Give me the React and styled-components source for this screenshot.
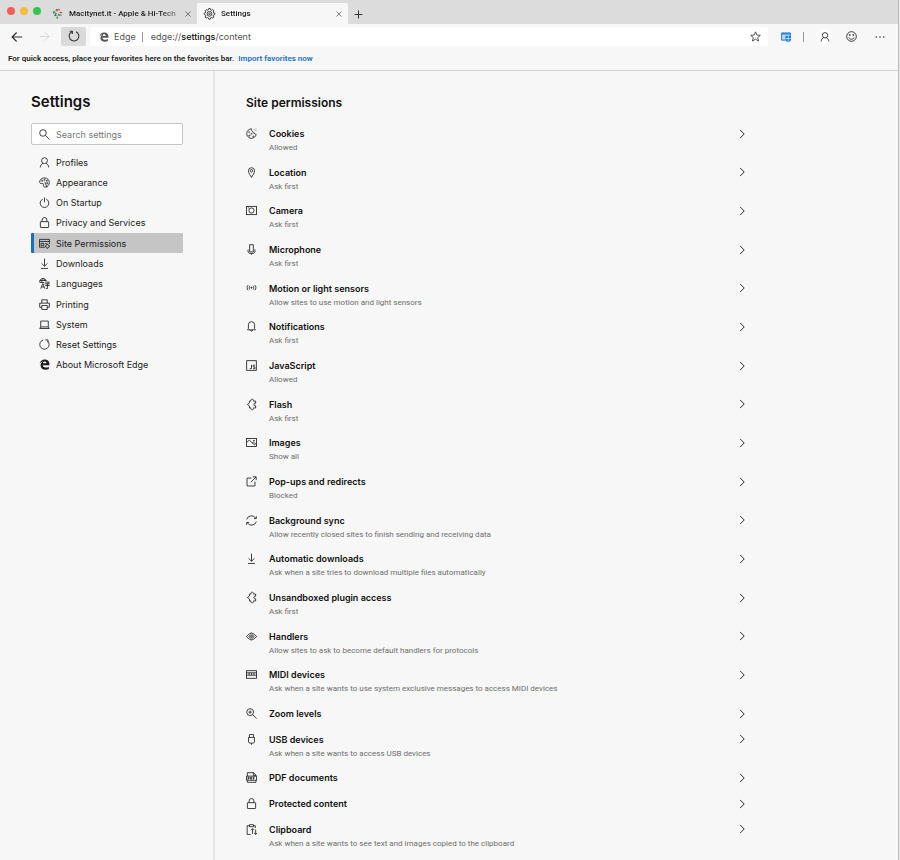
import React, { useState } from "react";
import styled, { createGlobalStyle } from "styled-components";

const GlobalStyle = createGlobalStyle`
  * {
    box-sizing: border-box;
  }

  body {
    margin: 0;
    background: #e6e6e6;
    font-family: Inter, "Liberation Sans", sans-serif;
    font-size: 9px;
    color: #1b1b1b;
  }

  button, input {
    font: inherit;
    color: inherit;
    border: 0;
    padding: 0;
    background: none;
  }

  a {
    color: inherit;
    text-decoration: none;
  }
`;

const Window = styled.div`
  display: flex;
  flex-direction: column;
  min-height: 100vh;
  margin-right: 1px;
  border-right: 1px solid #bdbdbd;
  background: #f7f7f7;
`;

const TabStrip = styled.div`
  display: flex;
  align-items: flex-end;
  height: 24px;
  padding-left: 7px;
  background: #dcdcdc;
`;

const Lights = styled.div`
  display: flex;
  align-self: center;
  gap: 5px;
  width: 43px;
  padding-bottom: 2px;
`;

const Light = styled.button`
  width: 8px;
  height: 8px;
  border-radius: 50%;
  background: ${props => props.$color};
`;

const Tab = styled.div`
  display: flex;
  align-items: center;
  gap: 6px;
  width: ${props => props.$active ? "151px" : "147px"};
  height: 21px;
  padding: 0 5px 0 ${props => props.$active ? "7px" : "2px"};
  border-radius: 2px 2px 0 0;
  background: ${props => props.$active ? "#f7f7f7" : "transparent"};
  font-family: Roboto, "Liberation Sans", sans-serif;
  font-size: 8px;
`;

const TabTitle = styled.span`
  flex: 1;
  white-space: nowrap;
  font-weight: 500;
  mask-image: linear-gradient(to right, #000 85%, rgba(0, 0, 0, 0.4));
`;

const IconButton = styled.button`
  display: flex;
  align-items: center;
  justify-content: center;
  width: ${props => props.$size || 20}px;
  height: ${props => props.$size || 20}px;
  border-radius: ${props => props.$round ? "50%" : "2px"};
  background: ${props => props.$bg || "transparent"};
  color: ${props => props.$color || "#333"};
`;

const Toolbar = styled.div`
  display: flex;
  align-items: center;
  height: 26px;
  padding: 0 8px 1px 7px;
`;

const NavButtons = styled.div`
  display: flex;
  gap: 7px;
  margin-right: 4px;
`;

const ReloadButton = styled(IconButton)`
  width: 25px;
  height: 19px;
  background: #dadada;
`;

const AddressBar = styled.div`
  display: flex;
  flex: 1;
  align-items: center;
  height: 19px;
  padding: 0 3px 0 9px;
  border-radius: 2px;
  background: #fff;
  color: #555;
`;

const SiteLabel = styled.span`
  padding: 0 6px 0 5px;
`;

const Separator = styled.span`
  width: 1px;
  height: 10px;
  background: #999;
`;

const Url = styled.span`
  flex: 1;
  padding-left: 8px;

  b {
    font-weight: 500;
    color: #111;
  }
`;

const ToolbarActions = styled.div`
  display: flex;
  align-items: center;
  gap: 9px;
  margin-left: 10px;

  ${Separator} {
    margin-right: 4px;
  }
`;

const FavoritesBar = styled.div`
  display: flex;
  align-items: center;
  gap: 4px;
  height: 21px;
  padding: 0 8px 3px;
  border-bottom: 1px solid #d2d2d2;
  font-family: Roboto, "Liberation Sans", sans-serif;
  font-size: 8px;
  font-weight: 600;

  a {
    color: #1a6fc4;
  }
`;

const Page = styled.div`
  display: flex;
  flex: 1;
`;

const Sidebar = styled.aside`
  width: 215px;
  padding: 22px 30px 0 31px;
  border-right: 2px solid #e4e4e4;
`;

const SidebarTitle = styled.h1`
  margin: 0 0 13px;
  font-size: 15px;
  font-weight: 600;
  line-height: 17px;
  color: #111;
`;

const SearchBox = styled.label`
  display: flex;
  align-items: center;
  gap: 6px;
  height: 22px;
  margin-bottom: 7px;
  padding: 0 7px;
  border: 1px solid #c6c6c6;
  border-radius: 2px;
  background: #fff;

  input {
    flex: 1;
    min-width: 0;
    outline: none;
  }

  input::placeholder {
    color: #767676;
    opacity: 1;
  }
`;

const NavList = styled.nav`
  display: grid;
  grid-auto-rows: 1fr;
  min-height: 223px;
`;

const NavLink = styled.a`
  display: flex;
  align-items: center;
  gap: 6px;
  padding-left: 5px;
  border-left: 3px solid ${props => props.$active ? "#1a6fc4" : "transparent"};
  border-radius: 1px;
  background: ${props => props.$active ? "#c5c5c5" : "transparent"};
  background-clip: padding-box;
`;

const Main = styled.main`
  display: flex;
  flex: 1;
  flex-direction: column;
  padding: 24px 31px 0;
`;

const MainTitle = styled.h2`
  margin: 0 0 16px;
  font-size: 12px;
  font-weight: 600;
  line-height: 16px;
  color: #111;
`;

const PermissionList = styled.div`
  display: flex;
  flex: 1;
  flex-direction: column;
  justify-content: space-between;
  max-width: 501px;
`;

const PermissionRow = styled.button`
  display: flex;
  align-items: flex-start;
  gap: 12px;
  height: ${props => props.$tall ? "37px" : "24px"};
  text-align: left;
`;

const RowIcon = styled.span`
  display: flex;
  align-items: center;
  height: 13px;
`;

const PermissionText = styled.span`
  flex: 1;
  line-height: 14px;
`;

const PermissionName = styled.span`
  display: block;
  font-weight: 600;
  color: #111;
`;

const PermissionState = styled.span`
  display: block;
  font-family: Roboto, "Liberation Sans", sans-serif;
  font-size: 8px;
  color: #6e6e6e;
`;

const Svg = styled.svg`
  flex: none;
  width: ${props => props.$size}px;
  height: ${props => props.$size}px;
  overflow: visible;
`;

// All drawings share a 16 unit grid
const shapes = {
  back: <path d="M15 8H1.5M7.5 2L1.5 8l6 6" />,
  forward: <path d="M1 8h13.5M8.5 2l6 6-6 6" />,
  reload: <><path d="M10.7 2.2A6.5 6.5 0 1 1 5.3 2.2" /><path d="M2.3 1.6h3.5v3.7" /></>,
  reset: <><path d="M6 1.5A6.8 6.8 0 1 0 12.5 3" /><path d="M9.2 1.3h3.8v3.7" /></>,
  close: <path d="M3 3l10 10M13 3L3 13" />,
  plus: <path d="M8 1v14M1 8h14" />,
  star: <path d="M8 1.2l2 4.7 5 .4-3.8 3.3 1.2 5L8 11.9l-4.4 2.7 1.2-5L1 6.3l5-.4z" />,
  chevron: <path d="M5 1.5L11.5 8 5 14.5" />,
  search: <><circle cx="5.8" cy="5.8" r="4.8" /><path d="M9.3 9.3l6 6" /></>,
  person: <><circle cx="8" cy="5.3" r="4.3" /><path d="M1.8 15.2c.3-3 1.8-5 4-6M14.2 15.2c-.3-3-1.8-5-4-6" /></>,
  smile: <><circle cx="8" cy="8" r="7" /><path d="M4.2 9.5c1.2 3.3 6.4 3.3 7.6 0" /><circle cx="5.5" cy="5.8" r=".7" fill="currentColor" /><circle cx="10.5" cy="5.8" r=".7" fill="currentColor" /></>,
  more: <g fill="currentColor" stroke="none"><circle cx="2" cy="8" r="1.3" /><circle cx="8" cy="8" r="1.3" /><circle cx="14" cy="8" r="1.3" /></g>,
  gear: <><path d="M6.8.8h2.4l.5 1.9 1.3.6 1.8-1 1.6 1.7-1 1.8.5 1.2 1.9.6v1.8l-1.9.7-.5 1.2 1 1.8-1.7 1.6-1.7-1-1.3.6-.5 1.9H6.8l-.6-1.9-1.2-.6-1.8 1-1.7-1.6 1.1-1.8L2 10.1l-1.7-.7V7.6L2 7l.6-1.2-1.1-1.8 1.7-1.7 1.8 1 1.2-.6z" /><circle cx="8" cy="8.4" r="3.5" /><circle cx="8" cy="8.4" r="1.1" /></>,
  palette: <><path d="M8.5 14.8c3.8-.2 6.5-3 6.5-6.8C15 4 12 1.3 8 1.3S1 4 1 7c0 2.3 1.5 3 3.3 2.5C6 9 7 10 6.5 11.5s.4 3.4 2 3.3z" /><circle cx="4.5" cy="5.5" r=".8" /><circle cx="8" cy="4" r=".8" /><circle cx="11.5" cy="5.5" r=".8" /><circle cx="12" cy="9" r=".8" /><path d="M8.5 7l3 8" /></>,
  power: <><path d="M5.4 3.2a6.3 6.3 0 1 0 5.2 0" /><path d="M8 .8v7" /></>,
  lock: <><rect x="2" y="6.8" width="12" height="8.5" rx=".6" /><path d="M4.5 6.8V4.3a3.5 3.5 0 0 1 7 0v2.5" /></>,
  permissions: <><path d="M8.5 13.5H.8V2h14.4v6.5M.8 5h14.4" /><path d="M3 7.8h4v3.5H3zM9 8h2.5" /><circle cx="12.2" cy="12" r="2.5" /><path d="M12.2 8.5v1M12.2 14.5v1M8.8 12h1M14.7 12h1" /></>,
  download: <path d="M8 .8v11M3.7 7.8L8 12l4.3-4.2M3 15.2h10" />,
  languages: <><path d="M1 6.5C.5 3 3 .8 5.800.8s4.500 1.700 4.900 4M1.200 3.600h9M1.500 6.500h6M5.500.8C4 2.500 3.800 4.500 4 6.500M7 1c1 1 1.300 2.200 1.300 3.500" /><path d="M2.5 15.5L5.5 8l3 7.500M3.500 13h4M8 8.500h7.500M9 6h6L12.300 8.800v6.500M9 11h6.700M12.300 15.300h-2" /></>,
  printer: <><path d="M4 12H1V6h14v6h-3" /><path d="M4 6V1.2h8V6M4 9.5h8v5.7H4z" /></>,
  laptop: <path d="M2.5 3h11v8.500h-11zM2.500 11.500L1 13.800h14l-1.500-2.300" />,
  edge: <path fill="currentColor" stroke="none" d="M.8 7.2C1.5 3 4.5.7 8.3.7c4.5 0 6.9 3 6.9 6.7v1.8H5.5c.1 2.2 2 3.2 4.3 3.2 1.7 0 3.2-.5 4.5-1.3v3.3c-1.5.8-3.2 1.2-5.1 1.2-4 0-6.9-2.4-6.9-6.2 0-2.4 1.2-4.5 3.4-5.6C3.5 4.4 1.9 5.4.8 7.2zm4.9-1h5.1c0-1.6-.8-2.5-2.4-2.5-1.5 0-2.5 1-2.7 2.5z" />,
  cookie: <><path d="M8 1.2A6.9 6.9 0 1 0 14.8 9c-1.5.3-2.5-.5-2.5-1.7-1.8.2-2.8-1-2.4-2.4C8.2 4.5 7.4 3 8 1.2z" /><circle cx="4.5" cy="6" r=".6" /><circle cx="8" cy="8.5" r=".7" /><circle cx="5" cy="11" r=".8" /><circle cx="10.5" cy="12" r=".6" /><path d="M12 1.7v.7M14.5 3.5v.7M14.7 1v.4" /></>,
  location: <><path d="M8 15.3C6.5 12 3.5 9.3 3.5 5.5a4.5 4.5 0 0 1 9 0c0 3.8-3 6.5-4.5 9.8z" /><circle cx="8" cy="5.5" r="1.8" /></>,
  camera: <><rect x=".8" y="2" width="14.4" height="12" /><circle cx="8" cy="8" r="3.8" /><path d="M2.7 4.2h1.5" /></>,
  microphone: <><path d="M5.3 1h5.4v10.500H5.300z" /><path d="M3 8v3.500l2 2.200h6l2-2.200V8M8 13.700v2" /></>,
  motion: <><path d="M3 3C1.2 5 1.2 8.5 3 10.500M5.500 4C4.500 6 4.500 7.500 5.500 9.500M13 3c1.800 2 1.800 5.500 0 7.500M10.500 4c1 2 1 3.500 0 5.500" /><circle cx="8" cy="6.8" r=".8" fill="currentColor" /></>,
  bell: <><path d="M2.3 12.8h11.4L12.500 11V5.500a4.500 4.500 0 0 0-9 0V11z" /><path d="M6.5 13c0 2.5 3 2.500 3 0" /></>,
  javascript: <><rect x="1" y="1" width="14" height="14" /><path d="M8 7v5.500H5.500M13 7.500h-2.500V10H13v2.700h-2.800" /></>,
  plugin: <path d="M5 3h2.300a1.900 1.900 0 1 1 3.400 0H14v3.200a1.900 1.900 0 1 0 0 3.600V13h-3.300a1.900 1.900 0 1 1-3.400 0H5v-2.800L2 8l3-2.300z" />,
  image: <><rect x=".8" y="2.2" width="14.4" height="11.6" /><path d="M1 8l3.7-3.5L13 12M9 9l2-1.500 4 3.500" /><circle cx="11.7" cy="5.3" r=".7" /></>,
  popup: <path d="M8 3H1.500v11.500H13V8M7 9l7.500-7.500M10 1.200h4.800V6" />,
  sync: <><path d="M1 6.500A7.200 7.200 0 0 1 14.300 5M15 9.500A7.200 7.200 0 0 1 1.700 11" /><path d="M15 1.700V5.200h-3.500M1 14.300v-3.500h3.500" /></>,
  handlers: <><path d="M.5 8L5 4l3-1.200L11 4l4.500 4L11 12l-3 1.200L5 12z" /><path d="M4 8l4-3.500L12 8l-4 3.500z" /><circle cx="8" cy="8" r="1.2" /></>,
  midi: <><rect x=".8" y="2.5" width="14.4" height="11" /><path d="M.8 5.500h14.400M.8 9h14.400M4.500 5.500V9M8 5.500V9M11.500 5.500V9" /></>,
  zoom: <><circle cx="6" cy="6" r="5" /><path d="M9.6 9.6l5.900 5.700M6 3.700v4.600M3.700 6h4.600" /></>,
  usb: <path d="M5 5V.8h6V5M3.700 5h8.600v7l-2 1.300H5.700l-2-1.300zM8 13.300v2.500" />,
  pdf: <><path d="M2 6V1h9l3.500 3.500V6M2 12v3h12.500v-3M10.700 1v3.800h3.800" /><path d="M.7 6h14.600v6H.7z" /><path d="M3 11V7.500h1.500v2H3M6.700 7.500v3h1.600v-3zM10.700 11V7.500h2M10.700 9.200H12" /></>,
  clipboard: <><path d="M5 2.500H1.700v12.700h5M11 2.500h2.500V6M5 1h6v3H5z" /><path d="M9.500 14.500V7M7.300 9l2.200-2.200L11.600 9M14 8v7M11.800 13l2.200 2.200L16 13" /></>,
};

const Icon = ({ name, size = 11, weight = 1.2 }) => (
  <Svg $size={size} viewBox="0 0 16 16" fill="none" stroke="currentColor" strokeWidth={weight} aria-hidden="true">
    {shapes[name]}
  </Svg>
);

const MacityIcon = () => (
  <Svg $size={11} viewBox="0 0 16 16" aria-hidden="true">
    <path fill="#d24a4a" d="M6 1l3 1-1 3-3-1zM11 5l4 1-1 2-3-1z" />
    <path fill="#43a253" d="M1 5l3-1 1 3-3 2zM9 8l3 1-1 3-3-1zM7 12l2 1-1 3-2-1z" />
    <path fill="#315a9c" d="M9 1l3 1-2 2zM3 10l3-1 1 2-3 1z" />
    <path fill="#333" d="M5 7l2 1-2 2zM12 9l2 1-1 2z" />
  </Svg>
);

const CollectionIcon = () => (
  <Svg $size={10} viewBox="0 0 16 16" fill="none" stroke="#1c7bdc" strokeWidth="1.6" aria-hidden="true">
    <path fill="#b9dcfa" d="M7 13H1V1.5h14V6" />
    <path d="M1 3h14" strokeWidth="2" />
    <path d="M11.5 16.5c-3-1-4.5-3-4.5-5V6h9v5.500c0 2-1.500 4-4.500 5z" fill="#1c7bdc" stroke="none" />
    <path d="M11.5 6.5V16M7.5 10.500h8" stroke="#fff" strokeWidth="1" />
  </Svg>
);

const navItems = [
  { icon: "person", label: "Profiles" },
  { icon: "palette", label: "Appearance" },
  { icon: "power", label: "On Startup" },
  { icon: "lock", label: "Privacy and Services" },
  { icon: "permissions", label: "Site Permissions" },
  { icon: "download", label: "Downloads" },
  { icon: "languages", label: "Languages" },
  { icon: "printer", label: "Printing" },
  { icon: "laptop", label: "System" },
  { icon: "reset", label: "Reset Settings" },
  { icon: "edge", label: "About Microsoft Edge" },
];

const permissions = [
  { icon: "cookie", name: "Cookies", state: "Allowed" },
  { icon: "location", name: "Location", state: "Ask first" },
  { icon: "camera", name: "Camera", state: "Ask first" },
  { icon: "microphone", name: "Microphone", state: "Ask first" },
  { icon: "motion", name: "Motion or light sensors", state: "Allow sites to use motion and light sensors" },
  { icon: "bell", name: "Notifications", state: "Ask first" },
  { icon: "javascript", name: "JavaScript", state: "Allowed" },
  { icon: "plugin", name: "Flash", state: "Ask first" },
  { icon: "image", name: "Images", state: "Show all" },
  { icon: "popup", name: "Pop-ups and redirects", state: "Blocked" },
  { icon: "sync", name: "Background sync", state: "Allow recently closed sites to finish sending and receiving data" },
  { icon: "download", name: "Automatic downloads", state: "Ask when a site tries to download multiple files automatically" },
  { icon: "plugin", name: "Unsandboxed plugin access", state: "Ask first" },
  { icon: "handlers", name: "Handlers", state: "Allow sites to ask to become default handlers for protocols" },
  { icon: "midi", name: "MIDI devices", state: "Ask when a site wants to use system exclusive messages to access MIDI devices" },
  { icon: "zoom", name: "Zoom levels" },
  { icon: "usb", name: "USB devices", state: "Ask when a site wants to access USB devices" },
  { icon: "pdf", name: "PDF documents" },
  { icon: "lock", name: "Protected content" },
  { icon: "clipboard", name: "Clipboard", state: "Ask when a site wants to see text and images copied to the clipboard" },
];

function Browser() {
  return (
    <header>
      <TabStrip>
        <Lights>
          <Light $color="#f25e57" aria-label="Close window" />
          <Light $color="#f6bd3b" aria-label="Minimize window" />
          <Light $color="#35c649" aria-label="Zoom window" />
        </Lights>
        <Tab>
          <MacityIcon />
          <TabTitle>Macitynet.it - Apple &amp; Hi-Tech</TabTitle>
          <IconButton $size={9} aria-label="Close tab"><Icon name="close" size={8} /></IconButton>
        </Tab>
        <Tab $active>
          <Icon name="gear" />
          <TabTitle>Settings</TabTitle>
          <IconButton $size={9} aria-label="Close tab"><Icon name="close" size={8} /></IconButton>
        </Tab>
        <IconButton aria-label="New tab"><Icon name="plus" size={9} weight={1.8} /></IconButton>
      </TabStrip>
      <Toolbar>
        <NavButtons>
          <IconButton aria-label="Back"><Icon name="back" size={12} weight={1.6} /></IconButton>
          <IconButton $color="#d0d0d0" aria-label="Forward"><Icon name="forward" /></IconButton>
          <ReloadButton aria-label="Reload"><Icon name="reload" size={12} weight={1.4} /></ReloadButton>
        </NavButtons>
        <AddressBar>
          <Icon name="edge" size={10} />
          <SiteLabel>Edge</SiteLabel>
          <Separator />
          <Url>edge://<b>settings</b>/content</Url>
          <IconButton aria-label="Add to favorites"><Icon name="star" /></IconButton>
        </AddressBar>
        <ToolbarActions>
          <IconButton $size={16} aria-label="Application guard"><CollectionIcon /></IconButton>
          <Separator />
          <IconButton $bg="#fff" $round $size={15} aria-label="Profile"><Icon name="person" size={10} weight={1.5} /></IconButton>
          <IconButton aria-label="Send feedback"><Icon name="smile" weight={1.4} /></IconButton>
          <IconButton aria-label="More"><Icon name="more" size={10} /></IconButton>
        </ToolbarActions>
      </Toolbar>
      <FavoritesBar>
        <span>For quick access, place your favorites here on the favorites bar.</span>
        <a href="#import">Import favorites now</a>
      </FavoritesBar>
    </header>
  );
}

function App() {
  const [ active, setActive ] = useState("Site Permissions");
  const [ search, setSearch ] = useState("");

  return (
    <Window>
      <GlobalStyle />
      <Browser />
      <Page>
        <Sidebar>
          <SidebarTitle>Settings</SidebarTitle>
          <SearchBox>
            <Icon name="search" />
            <input
              type="text"
              aria-label="Search settings"
              placeholder="Search settings"
              value={search}
              onChange={e => setSearch(e.target.value)}
            />
          </SearchBox>
          <NavList>
            {navItems.map(item => (
              <NavLink
                key={item.label}
                href="#settings"
                $active={item.label === active}
                onClick={() => setActive(item.label)}
              >
                <Icon name={item.icon} />
                {item.label}
              </NavLink>
            ))}
          </NavList>
        </Sidebar>
        <Main>
          <MainTitle>Site permissions</MainTitle>
          <PermissionList>
            {permissions.map(item => (
              <PermissionRow key={item.name} $tall={Boolean(item.state)}>
                <RowIcon><Icon name={item.icon} /></RowIcon>
                <PermissionText>
                  <PermissionName>{item.name}</PermissionName>
                  {item.state && <PermissionState>{item.state}</PermissionState>}
                </PermissionText>
                <RowIcon><Icon name="chevron" size={10} weight={1.5} /></RowIcon>
              </PermissionRow>
            ))}
          </PermissionList>
        </Main>
      </Page>
    </Window>
  );
}

export default App;
